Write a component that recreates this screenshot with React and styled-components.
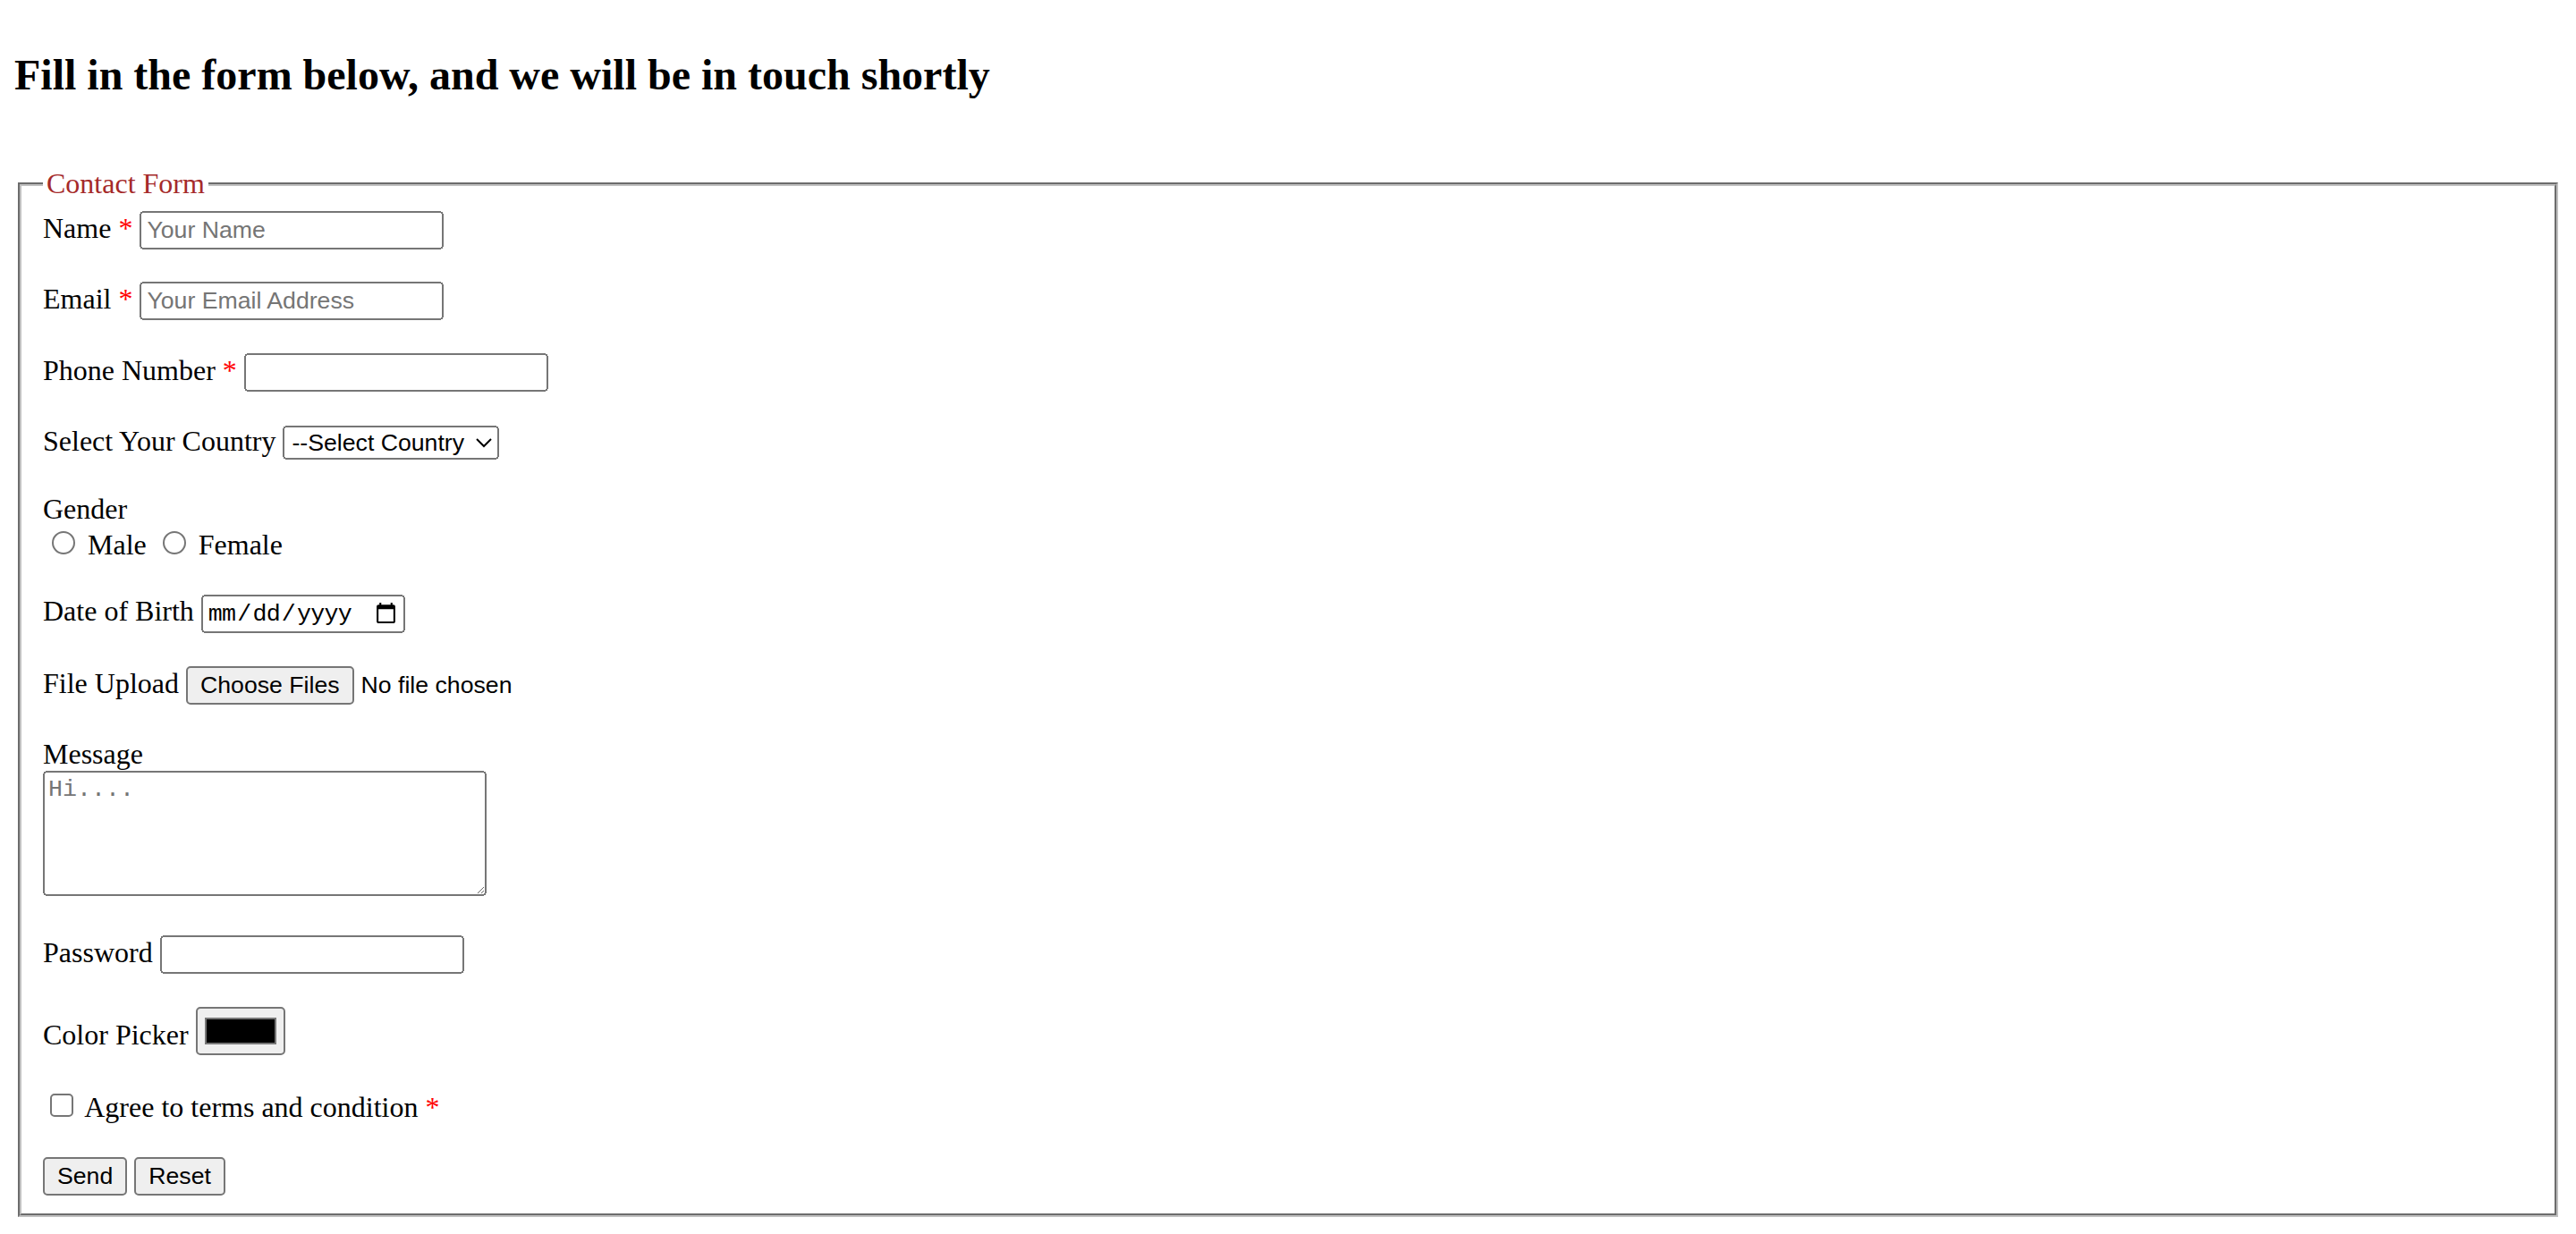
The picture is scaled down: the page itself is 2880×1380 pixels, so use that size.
import styled, { createGlobalStyle } from "styled-components";

const GlobalStyle = createGlobalStyle`
    html {
        zoom: 2;
    }
    body {
        margin: 8px;
        font-family: "Liberation Serif", "Times New Roman", serif;
        font-size: 16px;
        color: #000;
        background: #fff;
    }
    input, select, textarea, button {
        font-family: "Liberation Sans", Arial, sans-serif;
        font-size: 13.333px;
    }
`;

const Heading = styled.h2`
    font-size: 24px;
    font-weight: bold;
    margin: 0.83em 0;
`;

const Spacer = styled.div`
    height: 18.4px;
`;

const Form = styled.form`
    margin: 0;
`;

const Fieldset = styled.fieldset`
    margin: 0 2px;
    padding: 0.35em 0.75em 0.625em;
    border: 2px groove rgb(192, 192, 192);
`;

const Legend = styled.legend`
    color: brown;
    padding: 0 2px;
`;

const Row = styled.div`
    margin-bottom: ${(p) => (p.$tight ? "0" : "18.4px")};
`;

const Required = styled.span`
    color: red;
`;

const TextField = styled.input`
    width: 170px;
    box-sizing: border-box;
`;

const CountrySelect = styled.select`
    width: 121px;
`;

const DateField = styled.input`
    width: 114px;
    box-sizing: border-box;
    font-family: "Liberation Mono", "DejaVu Sans Mono", monospace;
    font-size: 13.333px;
    letter-spacing: -0.4px;
`;

const Message = styled.textarea`
    width: 248px;
    height: 70px;
    box-sizing: border-box;
    font-family: "Liberation Mono", "DejaVu Sans Mono", monospace;
    font-size: 13.333px;
`;

const Choice = styled.input`
    margin: ${(p) => (p.type === "checkbox" ? "3px 3px 3px 4px" : "3px 3px 0 5px")};
`;

const Button = styled.button`
    font-size: 13.333px;
`;

export default function App() {
    return (
        <>
            <GlobalStyle />
            <Heading>Fill in the form below, and we will be in touch shortly</Heading>
            <Spacer />
            <Form onSubmit={(e) => e.preventDefault()}>
                <Fieldset>
                    <Legend>Contact Form</Legend>

                    <Row>
                        <label htmlFor="name">Name <Required>*</Required></label>{" "}
                        <TextField id="name" type="text" placeholder="Your Name" />
                    </Row>

                    <Row>
                        <label htmlFor="email">Email <Required>*</Required></label>{" "}
                        <TextField id="email" type="email" placeholder="Your Email Address" />
                    </Row>

                    <Row>
                        <label htmlFor="phone">Phone Number <Required>*</Required></label>{" "}
                        <TextField id="phone" type="tel" />
                    </Row>

                    <Row>
                        <label htmlFor="country">Select Your Country</label>{" "}
                        <CountrySelect id="country" defaultValue="">
                            <option value="">--Select Country</option>
                            <option value="in">India</option>
                            <option value="us">United States</option>
                            <option value="uk">United Kingdom</option>
                        </CountrySelect>
                    </Row>

                    <Row>
                        <div>Gender</div>
                        <Choice type="radio" name="gender" id="male" />{" "}
                        <label htmlFor="male">Male</label>{" "}
                        <Choice type="radio" name="gender" id="female" />{" "}
                        <label htmlFor="female">Female</label>
                    </Row>

                    <Row>
                        <label htmlFor="dob">Date of Birth</label>{" "}
                        <DateField id="dob" type="date" />
                    </Row>

                    <Row>
                        <label htmlFor="file">File Upload</label>{" "}
                        <input id="file" type="file" multiple />
                    </Row>

                    <Row>
                        <label htmlFor="message">Message</label>
                        <br />
                        <Message id="message" placeholder="Hi...." />
                    </Row>

                    <Row>
                        <label htmlFor="password">Password</label>{" "}
                        <TextField id="password" type="password" />
                    </Row>

                    <Row>
                        <label htmlFor="color">Color Picker</label>{" "}
                        <input id="color" type="color" defaultValue="#000000" />
                    </Row>

                    <Row>
                        <Choice type="checkbox" id="agree" />{" "}
                        <label htmlFor="agree">Agree to terms and condition <Required>*</Required></label>
                    </Row>

                    <Row $tight>
                        <Button type="submit">Send</Button>{" "}
                        <Button type="reset">Reset</Button>
                    </Row>
                </Fieldset>
            </Form>
        </>
    );
}
